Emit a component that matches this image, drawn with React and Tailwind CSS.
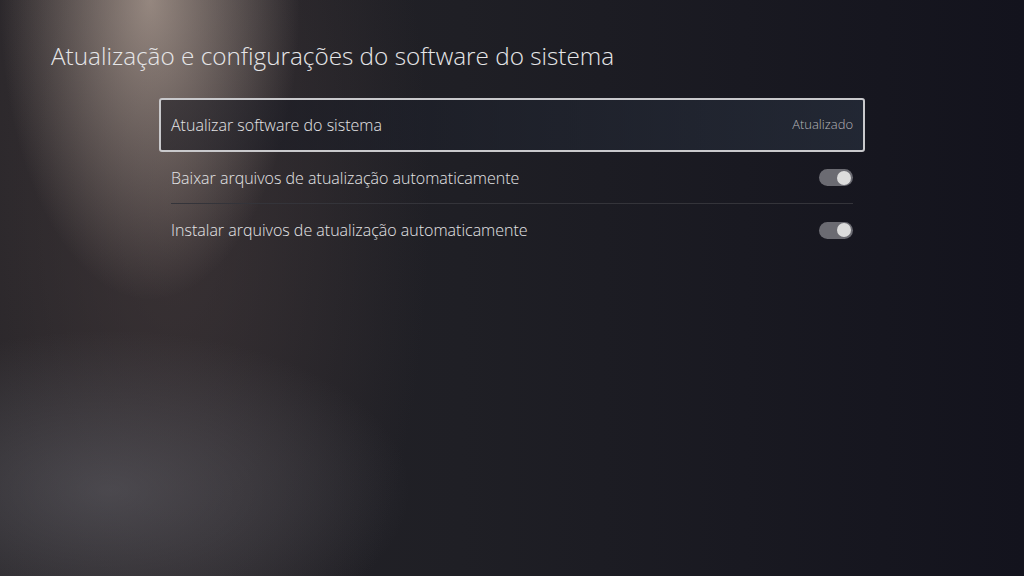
import React, { useState } from 'react';

const Toggle = ({ on }) => (
  <div className="w-[34px] h-[17px] rounded-full bg-[#6b6b72] flex items-center justify-end px-[2px]">
    <div className="w-[14px] h-[14px] rounded-full bg-[#dcdcdc]" />
  </div>
);

const App = () => {
  const [settings] = useState([
    { id: 'download', label: 'Baixar arquivos de atualização automaticamente', on: true },
    { id: 'install', label: 'Instalar arquivos de atualização automaticamente', on: true },
  ]);

  return (
    <div
      className="w-[1024px] h-[576px] overflow-hidden text-[#e4e4e6] bg-[radial-gradient(ellipse_150px_300px_at_150px_0px,rgba(215,195,180,0.6),transparent),radial-gradient(ellipse_300px_160px_at_110px_490px,rgba(110,110,118,0.45),transparent),radial-gradient(ellipse_260px_600px_at_170px_200px,rgba(80,66,66,0.5),transparent),linear-gradient(to_right,#262428_0%,#1f1f25_45%,#13131d_100%)]"
      style={{ fontFamily: '"Open Sans", "Noto Sans", sans-serif' }}
    >
      {/* Header */}
      <h1 className="pl-[51px] pt-[39px] text-[24.3px] leading-[34px] font-light text-[#e6e6e8]">
        Atualização e configurações do software do sistema
      </h1>

      <div className="ml-[159px] mt-[25px] w-[706px]">
        {/* Focused row */}
        <div className="h-[54px] flex items-center justify-between px-[10px] border-2 border-[#c9c9cc] rounded-[3px] bg-[linear-gradient(to_right,rgba(20,20,28,0.55),rgba(40,48,62,0.65))]">
          <span className="text-[16px] font-light">Atualizar software do sistema</span>
          <span className="text-[13px] font-light text-[#b4b4b8]">Atualizado</span>
        </div>

        {settings.map((s, i) => (
          <div key={s.id} className="px-[12px]">
            <div className={`h-[52px] flex items-center justify-between ${i === 0 ? 'border-b border-[#34343a]' : ''}`}>
              <span className="text-[16px] font-light">{s.label}</span>
              <Toggle on={s.on} />
            </div>
          </div>
        ))}
      </div>
    </div>
  );
};

export default App;
